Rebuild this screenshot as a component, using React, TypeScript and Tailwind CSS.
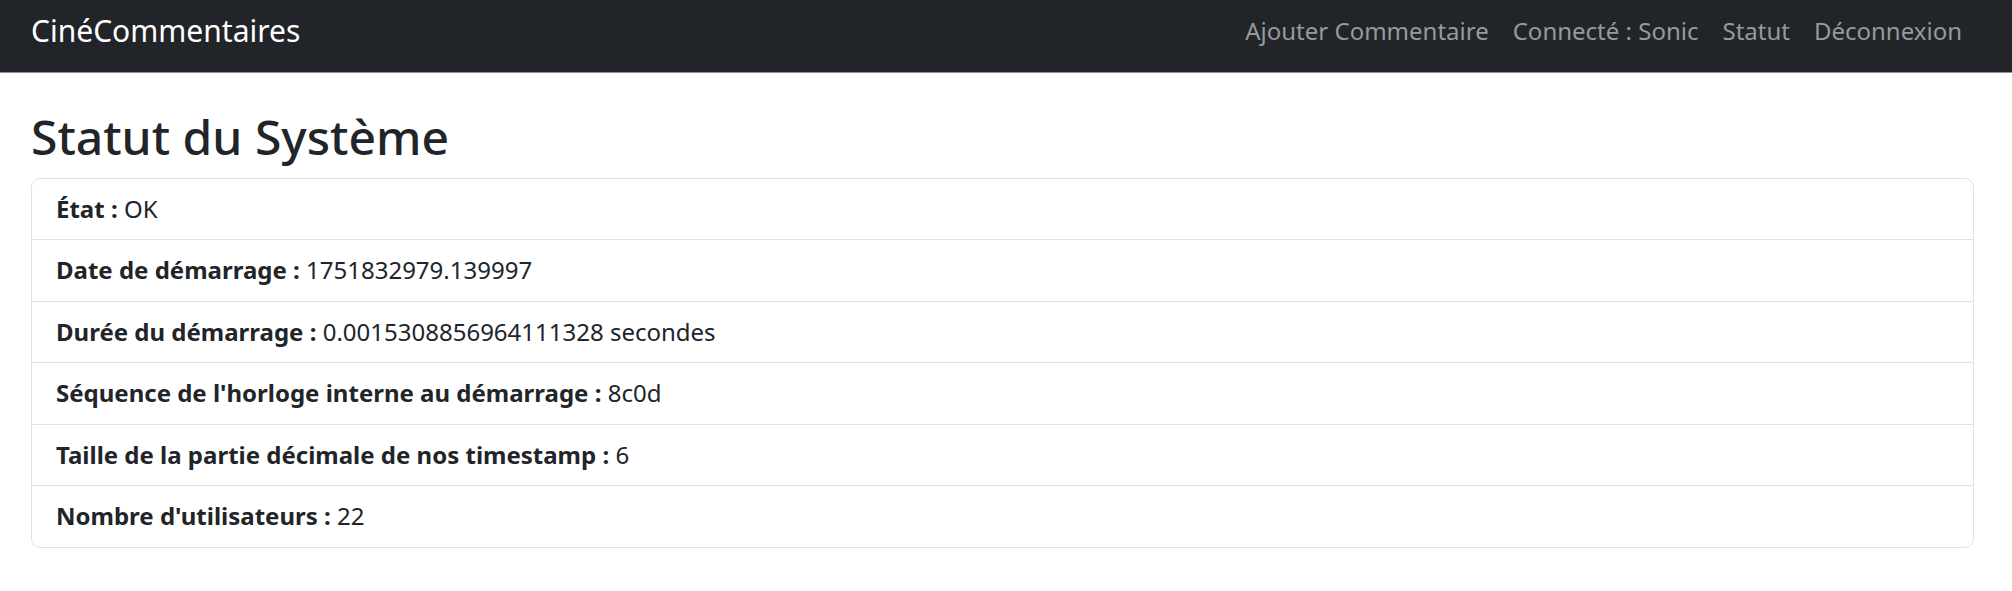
import React from 'react';

const NAV_LINKS = ['Ajouter Commentaire', 'Connecté : Sonic', 'Statut', 'Déconnexion'];

const STATUS_ROWS: { label: string; value: string }[] = [
    { label: 'État :', value: 'OK' },
    { label: 'Date de démarrage :', value: '1751832979.139997' },
    { label: 'Durée du démarrage :', value: '0.0015308856964111328 secondes' },
    { label: "Séquence de l'horloge interne au démarrage :", value: '8c0d' },
    { label: 'Taille de la partie décimale de nos timestamp :', value: '6' },
    { label: "Nombre d'utilisateurs :", value: '22' },
];

export default function App() {
    return (
        <div className="min-h-screen bg-white text-[#212529] font-['Noto_Sans','Open_Sans',sans-serif]">
            {/* Navbar */}
            <nav className="h-[73px] bg-[#212529] border-b border-[#909294]">
                <div className="flex items-center justify-between h-full pl-[31px] pr-[38px] pb-[11px]">
                    <a className="text-white text-[30px] leading-[45px] whitespace-nowrap">CinéCommentaires</a>
                    <ul className="flex items-center">
                        {NAV_LINKS.map(link => (
                            <li key={link}>
                                <a className="block px-3 text-[24px] leading-[36px] text-[#97999b] whitespace-nowrap">
                                    {link}
                                </a>
                            </li>
                        ))}
                    </ul>
                </div>
            </nav>

            {/* Content */}
            <main className="pl-[31px] pr-[38px] pt-[35px]">
                <h2 className="text-[48px] leading-[57.6px] font-medium mb-[12px]">Statut du Système</h2>
                <ul className="border border-[#dee2e6] rounded-[9px] text-[24px] leading-[36px]">
                    {STATUS_ROWS.map((row, i) => (
                        <li
                            key={row.label}
                            className={`px-6 py-[12.25px] ${i > 0 ? 'border-t border-[#dee2e6]' : ''}`}
                        >
                            <strong className="font-bold">{row.label}</strong> {row.value}
                        </li>
                    ))}
                </ul>
            </main>
        </div>
    );
}
